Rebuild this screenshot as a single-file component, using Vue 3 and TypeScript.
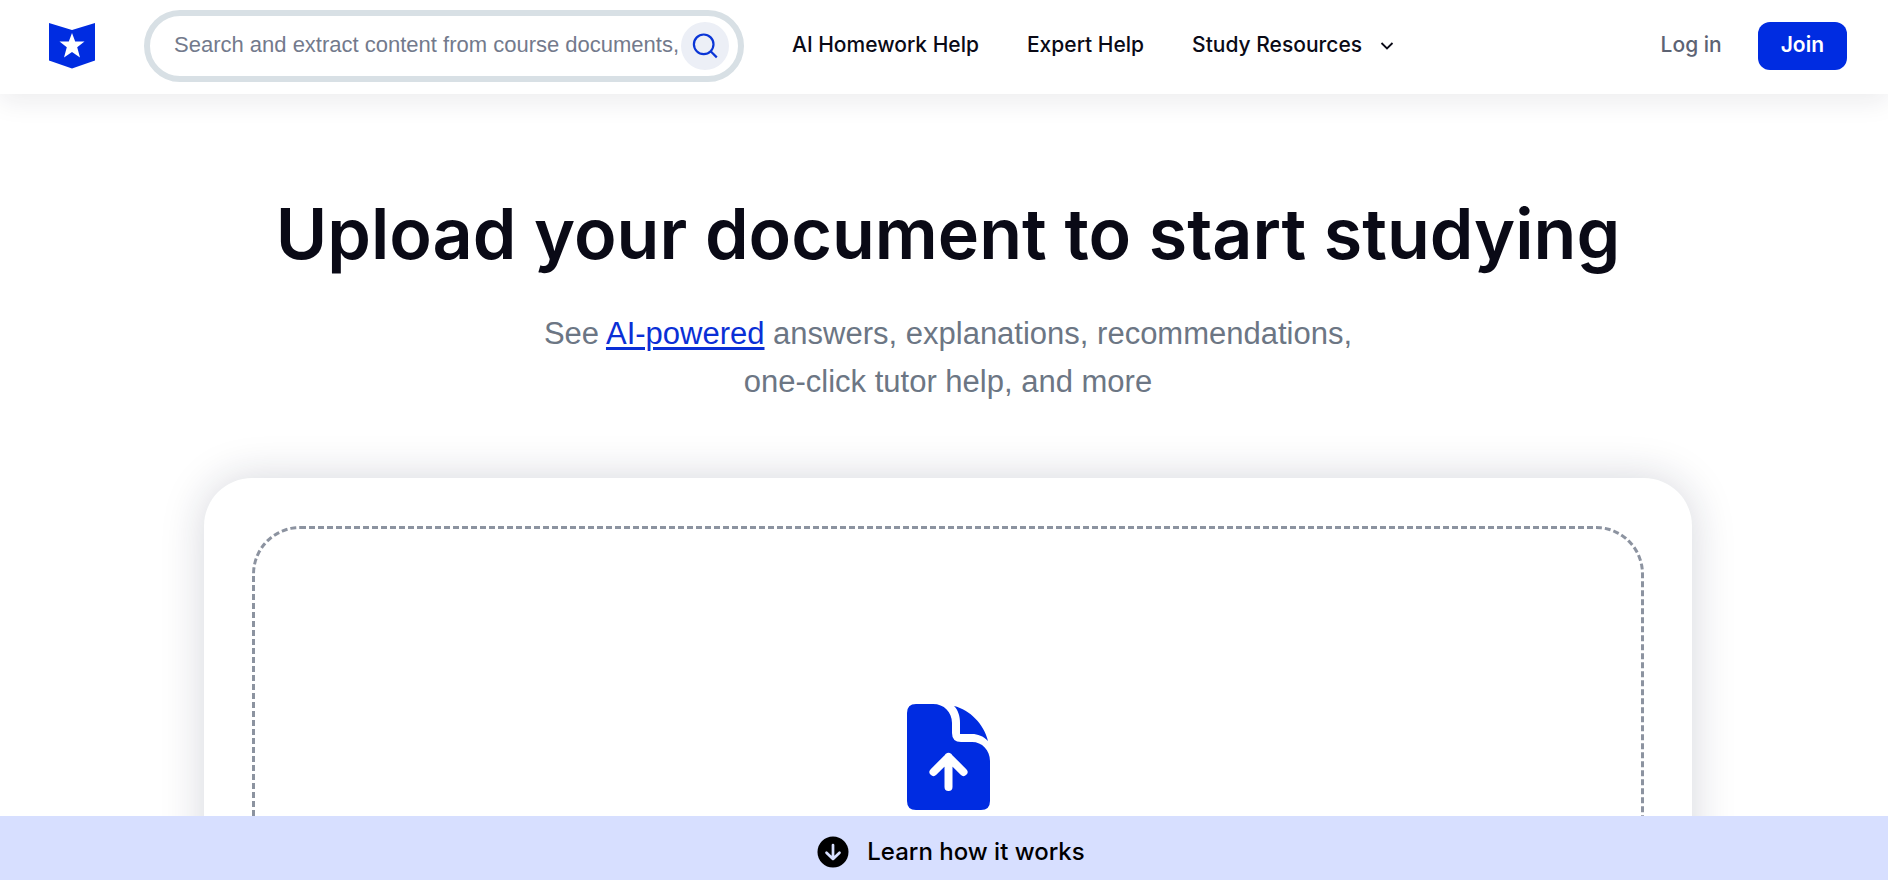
<script setup lang="ts">
import { ref } from 'vue'

interface NavItem {
  label: string
  href: string
}

const query = ref('')
const navItems: NavItem[] = [
  { label: 'AI Homework Help', href: '#homework' },
  { label: 'Expert Help', href: '#experts' },
]
</script>

<template>
  <div class="page">
    <header class="header">
      <a class="logo" href="#home" aria-label="Home">
        <svg width="46" height="46" viewBox="0 0 46 46" aria-hidden="true">
          <path fill="#002ce1" d="M0 0 23 7 46 0V37.500L23 45.500 0 37.500Z" />
          <path fill="#fff" d="M23 10 26.200 18.500H35.500L28.200 24.300 31 34.500 23 28.900 15 34.500 17.800 24.300 10.500 18.500H19.800Z" />
        </svg>
      </a>

      <form class="search" role="search" @submit.prevent>
        <input
          v-model="query"
          class="search-input"
          type="text"
          aria-label="Search"
          placeholder="Search and extract content from course documents, and more"
        />
        <button class="search-button" type="submit" aria-label="Submit search">
          <svg width="48" height="48" viewBox="0 0 48 48" fill="none" stroke="#0a35d6" stroke-width="2.200" aria-hidden="true">
            <circle cx="22.700" cy="22.300" r="9.800" />
            <path d="M29.600 29.200 35.800 35.400" />
          </svg>
        </button>
      </form>

      <nav class="nav" aria-label="Main">
        <a v-for="item in navItems" :key="item.label" class="nav-link" :href="item.href">{{ item.label }}</a>
        <button class="nav-link nav-menu" type="button" aria-haspopup="true">
          Study Resources
          <svg width="14" height="14" viewBox="0 0 14 14" fill="none" stroke="#0a0a16" stroke-width="1.800" aria-hidden="true">
            <path d="M1.500 5 7 10.500 12.500 5" />
          </svg>
        </button>
      </nav>

      <div class="account">
        <a class="login" href="#login">Log in</a>
        <button class="join" type="button">Join</button>
      </div>
    </header>

    <main class="main">
      <h1 class="title">Upload your document to start studying</h1>
      <p class="subtitle">
        See <a class="subtitle-link" href="#ai">AI-powered</a> answers, explanations, recommendations,<br />
        one-click tutor help, and more
      </p>

      <section class="card">
        <label class="dropzone">
          <input class="file-input" type="file" aria-label="Upload a document" />
          <svg width="83" height="106" viewBox="0 0 83 106" aria-hidden="true">
            <g fill="#002ce1">
              <path d="M9 0H26C37 0 45 8 45 19V29Q45 38 54 38H65C75 38 83 46 83 57V97Q83 106 74 106H9Q0 106 0 97V9Q0 0 9 0Z" />
              <path d="M47 2C63 6 77 20 81 37C76 32 71 30 65 30H53V19C53 12 51 6 47 2Z" />
            </g>
            <path d="M41.500 83V53M26.500 68 41.500 53 56.500 68" fill="none" stroke="#fff" stroke-width="8" stroke-linecap="round" stroke-linejoin="round" />
          </svg>
        </label>
      </section>
    </main>

    <button class="learn" type="button">
      <svg width="32" height="32" viewBox="0 0 32 32" aria-hidden="true">
        <circle cx="16" cy="16" r="15.500" fill="#000" />
        <path d="M16 9V23M9.500 16.700 16 23 22.500 16.700" fill="none" stroke="#d7dfff" stroke-width="2.700" stroke-linecap="round" stroke-linejoin="round" />
      </svg>
      Learn how it works
    </button>
  </div>
</template>

<style>
body {
  margin: 0;
  background: #fff;
}
</style>

<style scoped>
.page {
  box-sizing: border-box;
  display: flex;
  flex-direction: column;
  height: 100vh;
  font-family: Inter, "Liberation Sans", sans-serif;
  color: #0a0a16;
}

.page *,
.page *::before {
  box-sizing: border-box;
}

.page svg {
  display: block;
  flex: none;
}

button {
  border: 0;
  background: none;
  font: inherit;
  color: inherit;
  cursor: pointer;
}

a {
  color: inherit;
  text-decoration: none;
}

.header {
  position: relative;
  z-index: 1;
  display: flex;
  flex: none;
  align-items: center;
  padding: 10px 41px 12px 49px;
  background: #fff;
  box-shadow: 0 8px 24px rgba(20, 28, 50, 0.08);
  font-size: 21px;
  font-weight: 500;
  line-height: 28px;
}

.search {
  display: flex;
  align-items: center;
  width: 600px;
  height: 72px;
  margin-left: 49px;
  padding: 0 9px 0 24px;
  border: 6px solid #d8e0e5;
  border-radius: 36px;
}

.search-input {
  flex: 1;
  min-width: 0;
  height: 48px;
  padding: 0 0 2px;
  border: 0;
  outline: 0;
  background: none;
  font: 22px "Liberation Sans", Arial, sans-serif;
  color: #0a0a16;
}

.search-input::placeholder {
  color: #737a8c;
  opacity: 1;
}

.search-button {
  width: 48px;
  height: 48px;
  padding: 0;
  border-radius: 50%;
  background: #eceff6;
}

.nav {
  display: flex;
  gap: 48px;
  margin-left: 48px;
  padding-bottom: 2px;
  white-space: nowrap;
}

.nav-menu {
  display: flex;
  align-items: center;
  gap: 18px;
  padding: 0;
}

.account {
  display: flex;
  align-items: center;
  gap: 36px;
  margin-left: auto;
  white-space: nowrap;
}

.login {
  padding-bottom: 2px;
  color: #5d6373;
}

.join {
  height: 48px;
  padding: 0 23px 2px;
  border-radius: 12px;
  background: #002ce1;
  color: #fff;
  font-weight: 600;
}

.main {
  display: flex;
  flex: 1;
  flex-direction: column;
  align-items: center;
  min-height: 0;
  padding: 96px 0 96px 8px;
  overflow-y: auto;
  scrollbar-width: none;
  text-align: center;
}

.title {
  margin: 0 0 32px;
  font-size: 70px;
  font-weight: 600;
  line-height: 88px;
}

.subtitle {
  margin: 0 0 72px;
  font-family: "Liberation Sans", Arial, sans-serif;
  font-size: 31px;
  line-height: 48px;
  color: #6c7684;
}

.subtitle-link {
  color: #0a2fd6;
  text-decoration: underline;
  text-decoration-thickness: 3px;
  text-underline-offset: 3px;
}

.card {
  width: 80%;
  max-width: 1488px;
  padding: 48px;
  border-radius: 48px;
  background: #fff;
  box-shadow: 0 0 44px rgba(20, 28, 60, 0.18);
}

.dropzone {
  display: flex;
  justify-content: center;
  min-height: 480px;
  padding-top: 175px;
  border: 3px dashed #8c93a0;
  border-radius: 48px;
  cursor: pointer;
}

.file-input {
  position: absolute;
  width: 1px;
  height: 1px;
  opacity: 0;
}

.learn {
  display: flex;
  flex: none;
  align-items: center;
  justify-content: center;
  gap: 18px;
  width: 100%;
  height: 64px;
  padding: 8px 0 0 14px;
  background: #d7dfff;
  color: #000;
  font-size: 24px;
  font-weight: 500;
  line-height: 32px;
}
</style>
